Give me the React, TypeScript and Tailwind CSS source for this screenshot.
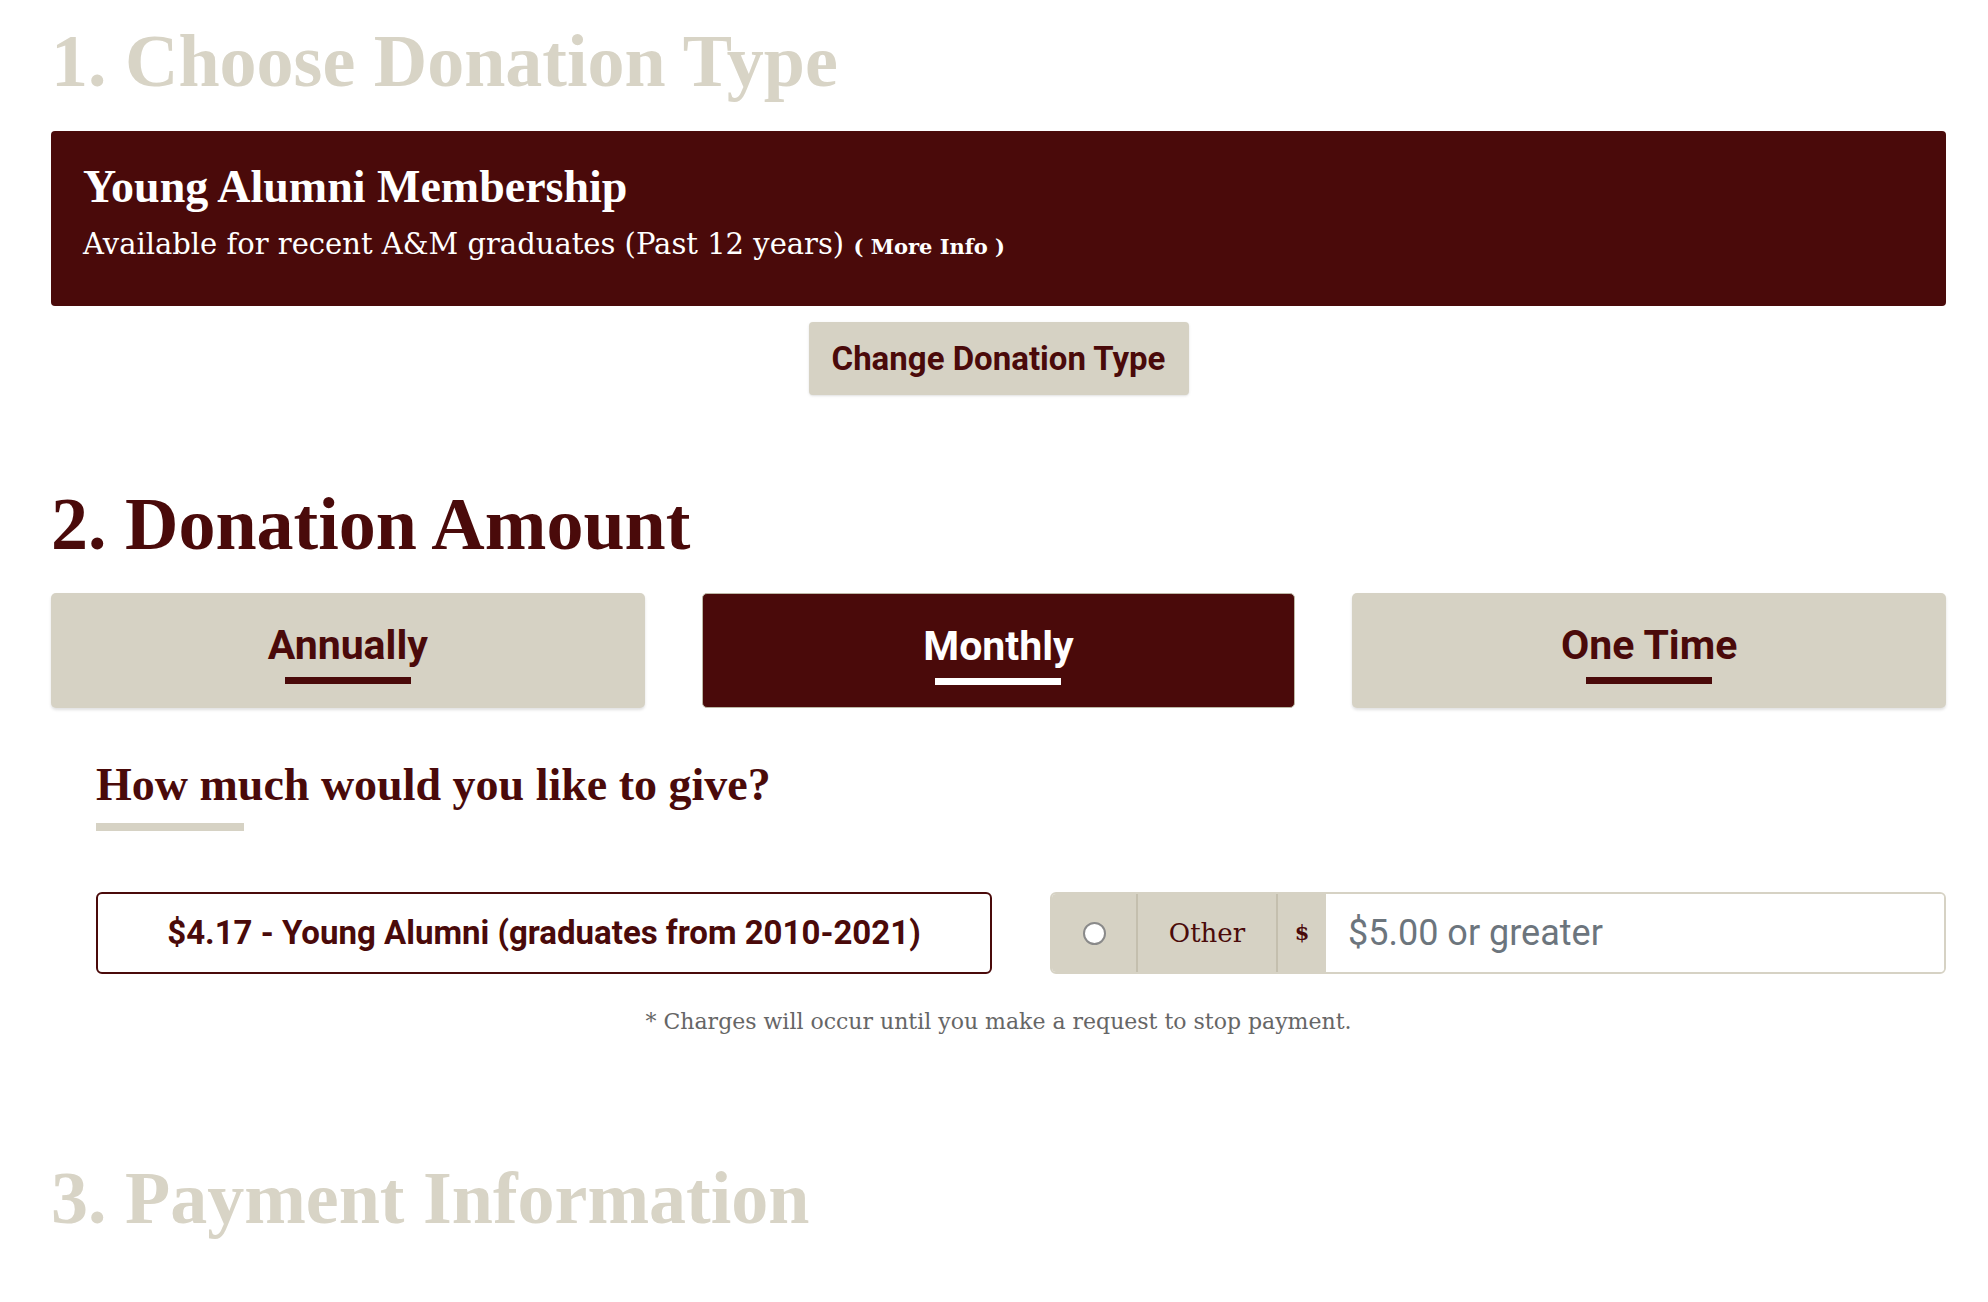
import React, { useState } from 'react'

const TABS = ['Annually', 'Monthly', 'One Time']

const serifHead = { fontFamily: '"Liberation Serif", "Times New Roman", serif' }
const serifBody = { fontFamily: '"DejaVu Serif", "Liberation Serif", serif' }
const sans = { fontFamily: 'Roboto, "Liberation Sans", Arial, sans-serif' }

export default function App() {
     const [tab, setTab] = useState('Monthly')

     return (
          <div className="min-h-screen bg-white pl-[51px] pr-[42px] pb-10">
               {/* Step 1 */}
               <h1 className="pt-[24px] text-[74px] leading-none font-bold text-[#d8d4c6]" style={serifHead}>
                    1. Choose Donation Type
               </h1>

               <div className="mt-[33px] h-[175px] rounded-[4px] bg-[#4a0a0a] pl-[32px] pt-[33px] text-white">
                    <h2 className="text-[46px] leading-none font-bold" style={serifHead}>
                         Young Alumni Membership
                    </h2>
                    <p className="mt-[20px] text-[29px] leading-none" style={serifBody}>
                         Available for recent A&amp;M graduates (Past 12 years){' '}
                         <span className="text-[21px] font-semibold">( More Info )</span>
                    </p>
               </div>

               <div className="mt-[16px] flex justify-center">
                    <button
                         className="h-[73px] w-[380px] rounded-[4px] bg-[#d6d2c4] text-[33px] font-bold text-[#4a0a0a] shadow-sm"
                         style={sans}
                    >
                         Change Donation Type
                    </button>
               </div>

               {/* Step 2 */}
               <h1 className="mt-[92px] text-[74px] leading-none font-bold text-[#4a0a0a]" style={serifHead}>
                    2. Donation Amount
               </h1>

               <div className="mt-[32px] grid grid-cols-3 gap-[57px]">
                    {TABS.map(t => {
                         const active = t === tab
                         return (
                              <button
                                   key={t}
                                   onClick={() => setTab(t)}
                                   className={
                                        active
                                             ? 'flex h-[115px] flex-col items-center rounded-[5px] border border-[#bdb8a6] bg-[#4a0a0a] pt-[32px] text-white'
                                             : 'flex h-[115px] flex-col items-center rounded-[5px] bg-[#d6d2c4] pt-[32px] text-[#4a0a0a] shadow-[0_2px_3px_rgba(0,0,0,0.12)]'
                                   }
                                   style={sans}
                              >
                                   <span className="text-[41px] leading-none font-bold">{t}</span>
                                   <span className={active ? 'mt-[11px] h-[7px] w-[126px] bg-white' : 'mt-[11px] h-[7px] w-[126px] bg-[#4a0a0a]'} />
                              </button>
                         )
                    })}
               </div>

               <div className="pl-[45px]">
                    <h3 className="mt-[54px] text-[46px] leading-none font-bold text-[#4a0a0a]" style={serifHead}>
                         How much would you like to give?
                    </h3>
                    <div className="mt-[15px] h-[8px] w-[148px] bg-[#d6d2c4]" />

                    <div className="mt-[61px] grid grid-cols-2 gap-[58px]">
                         <button
                              className="flex h-[82px] items-center justify-center rounded-[6px] border-2 border-[#4a0a0a] bg-white text-[33px] font-bold text-[#4a0a0a]"
                              style={sans}
                         >
                              $4.17 - Young Alumni (graduates from 2010-2021)
                         </button>

                         <div className="flex h-[82px] overflow-hidden rounded-[6px] border-2 border-[#d6d2c4]">
                              <label className="flex w-[86px] items-center justify-center border-r-2 border-[#c4bfae] bg-[#d6d2c4]">
                                   <span className="h-[23px] w-[23px] rounded-full border-2 border-[#8a8a8a] bg-white" />
                              </label>
                              <div
                                   className="flex w-[140px] items-center justify-center border-r-2 border-[#c4bfae] bg-[#d6d2c4] text-[26px] text-[#4a0a0a]"
                                   style={serifBody}
                              >
                                   Other
                              </div>
                              <div
                                   className="flex w-[48px] items-center justify-center bg-[#d6d2c4] text-[21px] font-bold text-[#4a0a0a]"
                                   style={serifBody}
                              >
                                   $
                              </div>
                              <input
                                   className="flex-1 bg-white pl-[22px] text-[36px] text-[#4a4f55] placeholder:text-[#6c757d] outline-none"
                                   style={sans}
                                   placeholder="$5.00 or greater"
                              />
                         </div>
                    </div>
               </div>

               <p className="mt-[37px] text-center text-[22px] leading-none text-[#666666]" style={serifBody}>
                    * Charges will occur until you make a request to stop payment.
               </p>

               {/* Step 3 */}
               <h1 className="mt-[128px] text-[74px] leading-none font-bold text-[#d8d4c6]" style={serifHead}>
                    3. Payment Information
               </h1>
          </div>
     )
}
